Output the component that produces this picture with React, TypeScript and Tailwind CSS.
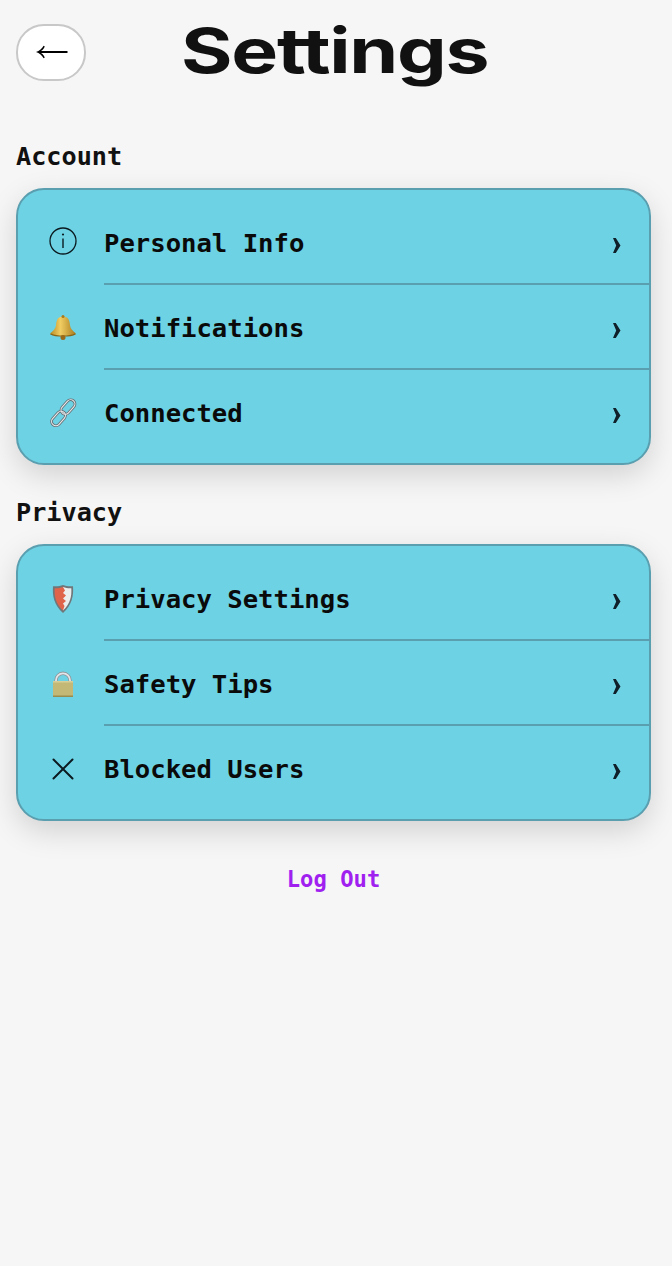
import type { ReactNode } from "react";

function BackArrow() {
  return (
    <svg width="36" height="20" viewBox="0 0 36 20" fill="#000000">
      <path d="M3 10c3.500-1.200 6-3.300 7.600-6.200l1.200.7C10.600 7 9.300 8.500 7.800 9h26.700v2H7.800c1.500.5 2.800 2 4 4.500l-1.200.7C9 13.300 6.500 11.200 3 10z" />
    </svg>
  );
}

function InfoIcon() {
  return (
    <svg className="mb-[4px]" width="30" height="30" viewBox="0 0 30 30" fill="none" stroke="#0b1a20">
      <circle cx="15" cy="15" r="13" strokeWidth="1.3" />
      <path d="M15 12.500V22" strokeWidth="1.400" />
      <circle cx="15" cy="8.500" r="1.100" fill="#0b1a20" stroke="none" />
    </svg>
  );
}

function BellIcon() {
  return (
    <svg width="30" height="30" viewBox="0 0 30 30">
      <defs>
        <linearGradient id="bell" x1="0" x2="1" y1="0" y2="0">
          <stop offset="0" stopColor="#b98a22" />
          <stop offset="0.4" stopColor="#f0cd62" />
          <stop offset="1" stopColor="#a87a1c" />
        </linearGradient>
      </defs>
      <path d="M15 3.500c-5 0-6.600 3.600-6.900 8-.3 4-2.600 6.500-6.100 9 3 2 7.500 2.600 13 2.600s10-.6 13-2.600c-3.500-2.500-5.800-5-6.100-9-.3-4.400-1.900-8-6.900-8z" fill="url(#bell)" />
      <path d="M3 20.500c3.500 1.500 7 2 12 2s8.500-.5 12-2c.5.4 1 .7 1 .7-3 2-7.500 2.400-13 2.400s-10-.4-13-2.400z" fill="#8a6414" />
      <circle cx="15" cy="24.500" r="2.500" fill="#9a6a18" />
      <circle cx="15" cy="3.500" r="1.500" fill="#a87a1c" />
    </svg>
  );
}

function LinkIcon() {
  return (
    <svg width="30" height="30" viewBox="0 0 30 30" fill="none">
      <g stroke="#666d72" strokeWidth="2.800">
        <rect x="2.250" y="16.250" width="16.500" height="8.500" rx="4.250" transform="rotate(-48 10.500 20.500)" />
        <rect x="11.750" y="4.750" width="16.500" height="8.500" rx="4.250" transform="rotate(-48 20 9)" />
      </g>
      <g stroke="#e8ecee" strokeWidth="1.100">
        <rect x="2.250" y="16.250" width="16.500" height="8.500" rx="4.250" transform="rotate(-48 10.500 20.500)" />
        <rect x="11.750" y="4.750" width="16.500" height="8.500" rx="4.250" transform="rotate(-48 20 9)" />
      </g>
    </svg>
  );
}

function ShieldIcon() {
  return (
    <svg width="30" height="30" viewBox="0 0 30 30">
      <path d="M15 1c3 1.200 6.500 1.600 10 1.200.8 9.500-1 18.800-10 26.800C6 21 4.200 11.700 5 2.200 8.500 2.600 12 2.200 15 1z" fill="#6f777b" />
      <path d="M15 3c3 1 5.500 1.400 8.300 1.200.5 8-.9 15.500-8.300 22.300z" fill="#eceeee" />
      <path d="M15 3c-3 1-5.500 1.400-8.300 1.200-.5 8 .9 15.500 8.300 22.300l1.500-4.500-1.500-2.500 3-2.500-3-2.500 3-3-3-2.500 2-2.500z" fill="#e0644a" />
    </svg>
  );
}

function LockIcon() {
  return (
    <svg width="30" height="30" viewBox="0 0 30 30">
      <path d="M8 13v-1.700a7 7 0 0 1 14 0V13" fill="none" stroke="#8d9398" strokeWidth="3.400" />
      <path d="M8 13v-1.700a7 7 0 0 1 14 0V13" fill="none" stroke="#e2e6e9" strokeWidth="1.800" />
      <rect x="5" y="12" width="20" height="16" rx="1" fill="#c4b877" />
      <rect x="5" y="12" width="20" height="1.500" fill="#d8cf98" />
      <rect x="5" y="26.500" width="20" height="1.500" fill="#978c50" />
    </svg>
  );
}

function CrossIcon() {
  return (
    <svg width="30" height="30" viewBox="0 0 30 30" fill="none" stroke="#0b1a20" strokeWidth="2" strokeLinecap="round">
      <path d="M5.500 5.500 24.500 24.500M24.500 5.500 5.500 24.500" />
    </svg>
  );
}

function Chevron() {
  return (
    <svg className="mt-[4px]" width="9" height="15" viewBox="0 0 9 15" fill="#10202a">
      <path d="M1 0h2.800L8.500 7.500 3.800 15H1l3.200-7.500z" />
    </svg>
  );
}

type Row = { icon: ReactNode; label: string };

const account: Row[] = [
  { icon: <InfoIcon />, label: "Personal Info" },
  { icon: <BellIcon />, label: "Notifications" },
  { icon: <LinkIcon />, label: "Connected" },
];

const privacy: Row[] = [
  { icon: <ShieldIcon />, label: "Privacy Settings" },
  { icon: <LockIcon />, label: "Safety Tips" },
  { icon: <CrossIcon />, label: "Blocked Users" },
];

function Section({ title, rows }: { title: string; rows: Row[] }) {
  return (
    <section>
      <h2 className="mb-[17px] h-[28px] text-[25.2px] leading-[28px] font-bold text-[#111111]">{title}</h2>
      <div className="w-[635px] rounded-[28px] border-2 border-[#5a9fb0] bg-[#6dd3e4] pt-[10px] pb-2 shadow-[0_10px_30px_rgba(0,0,0,0.15)]">
        {rows.map((row, i) => (
          <div key={row.label} className="flex h-[85px] pl-[30px]">
            <div className="flex w-[56px] shrink-0 items-center">{row.icon}</div>
            <div
              className={`flex flex-1 items-center justify-between border-b-2 pt-[4px] pr-[28px] ${
                i < rows.length - 1 ? "border-[#5a9fb0]" : "border-transparent"
              }`}
            >
              <span className="text-[25.6px] font-bold text-[#0a0a0a]">{row.label}</span>
              <Chevron />
            </div>
          </div>
        ))}
      </div>
    </section>
  );
}

export default function App() {
  return (
    <div className="min-h-[1266px] bg-[#f6f6f6] px-4 pt-6 font-['DejaVu_Sans_Mono','Liberation_Mono',monospace]">
      <header className="relative mb-[63px] flex h-[56px] items-center">
        <button className="flex h-[57px] w-[70px] items-center justify-center rounded-[28px] border-2 border-[#c8c8c8] bg-white">
          <BackArrow />
        </button>
        <h1 className="absolute left-[165px] top-[-13px] origin-left scale-x-[1.27] font-['Inter',sans-serif] text-[62px] leading-[80px] font-bold tracking-[-1px] text-[#111111]">
          Settings
        </h1>
      </header>
      <div className="flex flex-col gap-[34px]">
        <Section title="Account" rows={account} />
        <Section title="Privacy" rows={privacy} />
      </div>
      <div className="mt-[42px] w-[635px] text-center text-[22.2px] font-bold text-[#a020f0]">Log Out</div>
    </div>
  );
}
